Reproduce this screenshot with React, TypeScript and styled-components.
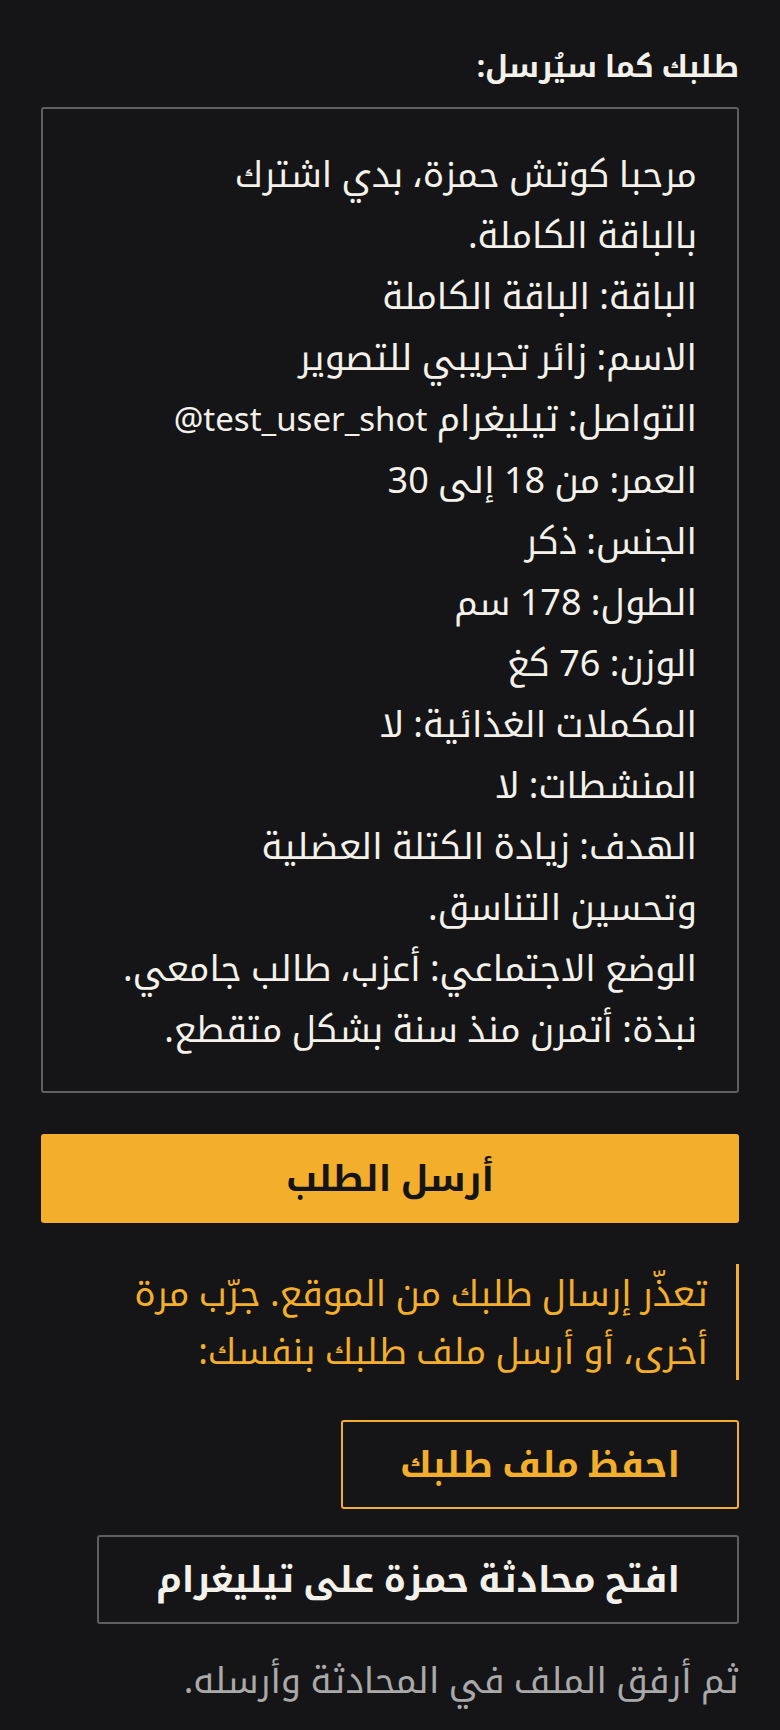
import styled, { createGlobalStyle } from "styled-components";

const GlobalStyle = createGlobalStyle`
    html, body {
        margin: 0;
        padding: 0;
        background-color: #151517;
    }
    body {
        font-family: "Noto Sans", "Noto Kufi Arabic", sans-serif;
        color: #f3f1ea;
    }
`;

const Page = styled.div`
    direction: rtl;
    display: flex;
    flex-direction: column;
    align-items: stretch;
    padding: 46px 41px 40px;
    min-height: 1730px;
    box-sizing: border-box;
`;

const Heading = styled.h3`
    margin: 0 0 21px;
    font-size: 30px;
    line-height: 40px;
    font-weight: bold;
    color: #f3f1ea;
`;

const Preview = styled.div`
    border: 2px solid #5f5f61;
    border-radius: 3px;
    padding: 34px 40px 32px;
    font-size: 36px;
    line-height: 61px;
`;

const PreviewLine = styled.div`
    margin: 0;
    white-space: pre-line;
`;

const Handle = styled.span`
    font-size: 33px;
`;

const SendButton = styled.button`
    margin-top: 41px;
    height: 89px;
    border: none;
    border-radius: 3px;
    background-color: #f3ae2b;
    color: #151517;
    font-family: inherit;
    font-size: 36px;
    font-weight: bold;
`;

const Warning = styled.div`
    margin-top: 41px;
    border-right: 3px solid #f3ae2b;
    padding-right: 28px;
    color: #f3ae2b;
    font-size: 36px;
    line-height: 58px;
    white-space: pre-line;
`;

const Actions = styled.div`
    margin-top: 40px;
    display: flex;
    flex-direction: column;
    align-items: flex-start;
    gap: 26px;
`;

const OutlineButton = styled.button<{ $accent?: boolean }>`
    height: 89px;
    padding: 0 57px;
    border: 2px solid ${p => (p.$accent ? "#f3ae2b" : "#5f5f61")};
    border-radius: 3px;
    background-color: transparent;
    color: ${p => (p.$accent ? "#f3ae2b" : "#f3f1ea")};
    font-family: inherit;
    font-size: 36px;
    font-weight: bold;
`;

const Note = styled.p`
    margin: 27px 0 0;
    color: #a9a9a9;
    font-size: 36px;
    line-height: 58px;
`;

// the message as it goes out, wrapped where the preview wraps it
const lines = [
    "مرحبا كوتش حمزة، بدي اشترك\nبالباقة الكاملة.",
    "الباقة: الباقة الكاملة",
    "الاسم: زائر تجريبي للتصوير",
    null,
    "العمر: من 18 إلى 30",
    "الجنس: ذكر",
    "الطول: 178 سم",
    "الوزن: 76 كغ",
    "المكملات الغذائية: لا",
    "المنشطات: لا",
    "الهدف: زيادة الكتلة العضلية\nوتحسين التناسق.",
    "الوضع الاجتماعي: أعزب، طالب جامعي.",
    "نبذة: أتمرن منذ سنة بشكل متقطع.",
];

function App() {
    return (
        <>
            <GlobalStyle />
            <Page>
                <Heading>طلبك كما سيُرسل:</Heading>
                <Preview>
                    {lines.map((line, i) =>
                        line === null ? (
                            <PreviewLine key={i}>
                                التواصل: تيليغرام <Handle dir="ltr">@test_user_shot</Handle>
                            </PreviewLine>
                        ) : (
                            <PreviewLine key={i}>{line}</PreviewLine>
                        )
                    )}
                </Preview>
                <SendButton>أرسل الطلب</SendButton>
                <Warning>
                    {"تعذّر إرسال طلبك من الموقع. جرّب مرة\nأخرى، أو أرسل ملف طلبك بنفسك:"}
                </Warning>
                <Actions>
                    <OutlineButton $accent>احفظ ملف طلبك</OutlineButton>
                    <OutlineButton>افتح محادثة حمزة على تيليغرام</OutlineButton>
                </Actions>
                <Note>ثم أرفق الملف في المحادثة وأرسله.</Note>
            </Page>
        </>
    );
}

export default App;
